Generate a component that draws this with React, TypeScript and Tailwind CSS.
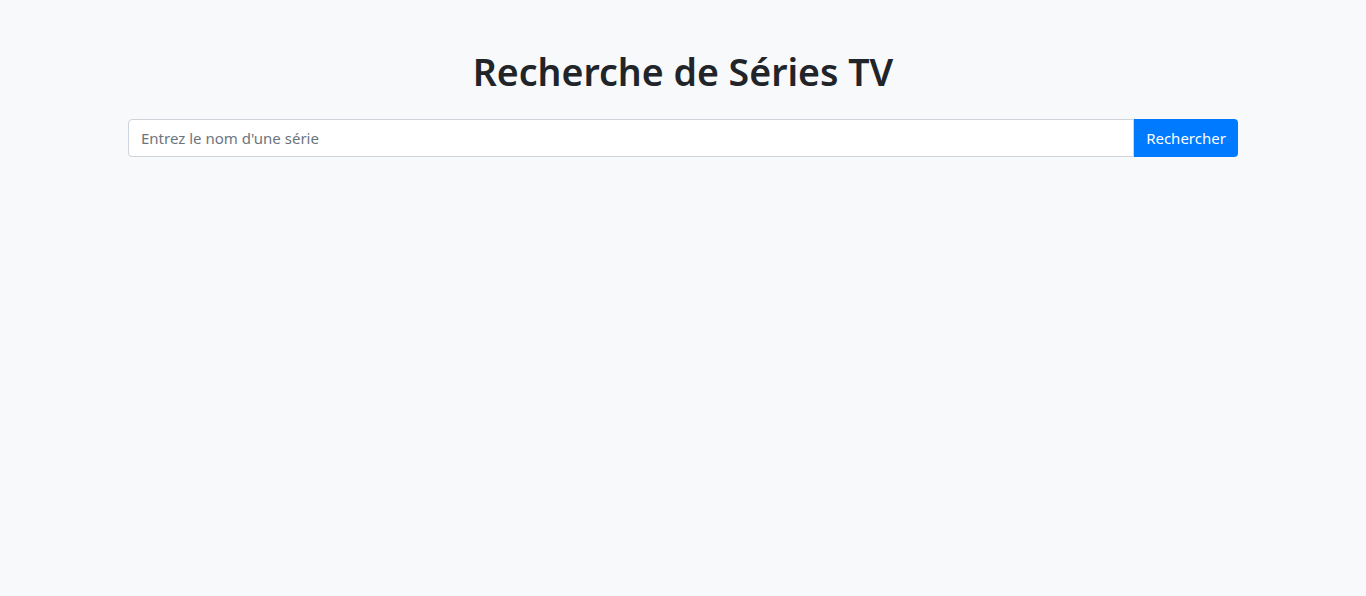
export default function App() {
  return (
    <div className="min-h-[596px] bg-[#f8f9fa] text-[#212529]" style={{ fontFamily: '"Noto Sans", "Open Sans", sans-serif' }}>
      <div className="mx-auto w-[1140px] px-[15px] pt-12">
        <h1 className="mb-[23px] text-center text-[37.5px] font-semibold leading-[48px]">Recherche de Séries TV</h1>
        <div className="flex h-[38px]">
          <input
            type="text"
            placeholder="Entrez le nom d'une série"
            className="h-[38px] min-w-0 flex-1 rounded-l-[4px] border border-[#ced4da] bg-white px-3 text-[15px] text-[#495057] outline-none placeholder:text-[#6c757d]"
          />
          <button className="h-[38px] w-[104px] rounded-r-[4px] bg-[#007bff] text-[15px] text-white">Rechercher</button>
        </div>
      </div>
    </div>
  );
}
